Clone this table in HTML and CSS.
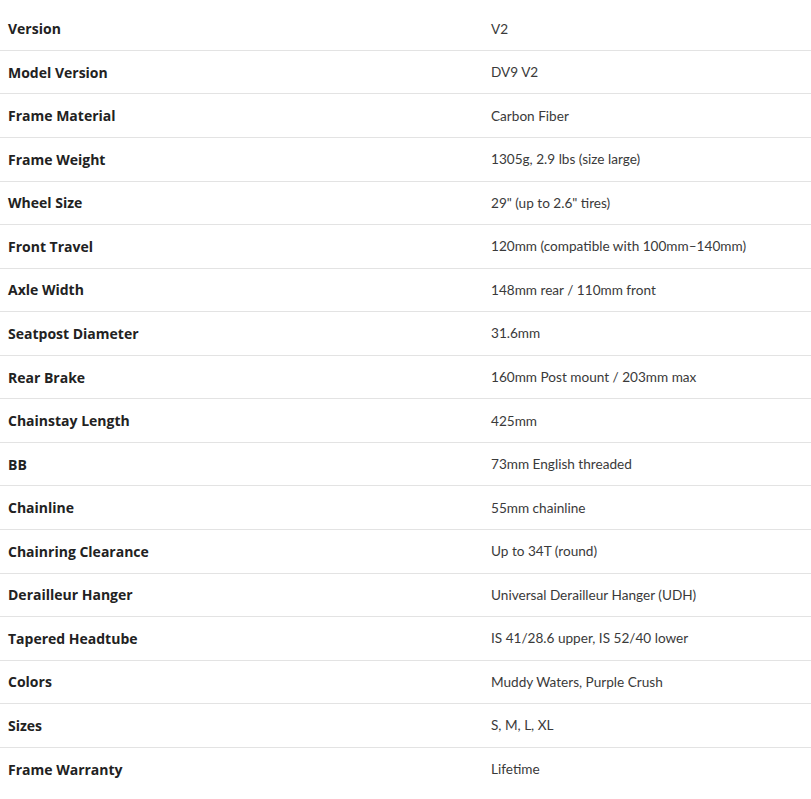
FILE: index.html
```html
<!DOCTYPE html>
<html>
<head>
<meta charset="utf-8">
<link rel="stylesheet" href="styles.css">
</head>
<body>
<div class="specs">
  <div class="row"><div class="label">Version</div><div class="value">V2</div></div>
  <div class="row"><div class="label">Model Version</div><div class="value">DV9 V2</div></div>
  <div class="row"><div class="label">Frame Material</div><div class="value">Carbon Fiber</div></div>
  <div class="row"><div class="label">Frame Weight</div><div class="value">1305g, 2.9 lbs (size large)</div></div>
  <div class="row"><div class="label">Wheel Size</div><div class="value">29" (up to 2.6" tires)</div></div>
  <div class="row"><div class="label">Front Travel</div><div class="value">120mm (compatible with 100mm–140mm)</div></div>
  <div class="row"><div class="label">Axle Width</div><div class="value">148mm rear / 110mm front</div></div>
  <div class="row"><div class="label">Seatpost Diameter</div><div class="value">31.6mm</div></div>
  <div class="row"><div class="label">Rear Brake</div><div class="value">160mm Post mount / 203mm max</div></div>
  <div class="row"><div class="label">Chainstay Length</div><div class="value">425mm</div></div>
  <div class="row"><div class="label">BB</div><div class="value">73mm English threaded</div></div>
  <div class="row"><div class="label">Chainline</div><div class="value">55mm chainline</div></div>
  <div class="row"><div class="label">Chainring Clearance</div><div class="value">Up to 34T (round)</div></div>
  <div class="row"><div class="label">Derailleur Hanger</div><div class="value">Universal Derailleur Hanger (UDH)</div></div>
  <div class="row"><div class="label">Tapered Headtube</div><div class="value">IS 41/28.6 upper, IS 52/40 lower</div></div>
  <div class="row"><div class="label">Colors</div><div class="value">Muddy Waters, Purple Crush</div></div>
  <div class="row"><div class="label">Sizes</div><div class="value">S, M, L, XL</div></div>
  <div class="row last"><div class="label">Frame Warranty</div><div class="value">Lifetime</div></div>
</div>
</body>
</html>
```
FILE: styles.css
```css
html, body {
  margin: 0;
  padding: 0;
  background: #fff;
}
body {
  font-family: "Lato", "Liberation Sans", sans-serif;
  font-size: 14px;
  padding-top: 7.4px;
}
.specs {
  display: flex;
  flex-direction: column;
}
.row {
  display: grid;
  grid-template-columns: 483px 1fr;
  height: 43.56px;
  box-sizing: border-box;
  border-bottom: 1px solid #e3e3e3;
  align-items: center;
}
.row.last {
  border-bottom: none;
}
.label {
  padding-left: 8px;
  font-family: "Open Sans", "Lato", sans-serif;
  font-weight: 700;
  font-size: 14px;
  color: #222;
}
.value {
  padding-left: 8px;
  font-size: 13.6px;
  color: #3a3a3a;
}
```
